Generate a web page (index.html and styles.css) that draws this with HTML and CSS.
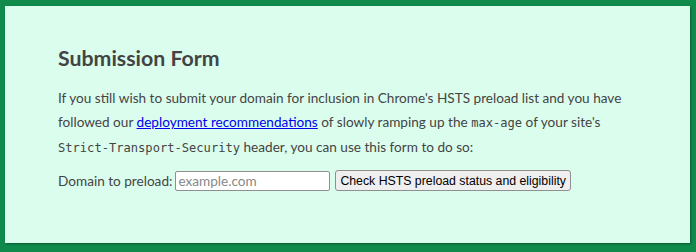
FILE: index.html
```html
<!DOCTYPE html>
<html>
<head>
<meta charset="utf-8">
<link rel="stylesheet" href="styles.css">
</head>
<body>
<div class="panel">
  <h2 class="title">Submission Form</h2>
  <p class="intro">If you still wish to submit your domain for inclusion in Chrome's HSTS preload list and you have followed our <a href="#">deployment recommendations</a> of slowly ramping up the <code>max-age</code> of your site's <code>Strict-Transport-Security</code> header, you can use this form to do so:</p>
  <form class="form">
    <label class="label">Domain to preload:</label>
    <input class="domain" type="text" placeholder="example.com">
    <button class="check" type="button">Check HSTS preload status and eligibility</button>
  </form>
</div>
</body>
</html>
```
FILE: styles.css
```css
html, body {
  margin: 0;
  padding: 0;
}
body {
  background: #0f8a4b;
  width: 696px;
  height: 252px;
  padding: 6px 6px 9px 5px;
  box-sizing: border-box;
  font-family: "Lato", "Noto Sans", sans-serif;
  color: #444;
}
.panel {
  background: #dbfded;
  height: 237px;
  box-sizing: border-box;
  padding: 38px 53px 0 53px;
  box-shadow: 1px 1px 2px rgba(0,0,0,0.35);
}
.title {
  margin: 0;
  font-size: 21.3px;
  font-weight: 700;
  line-height: 28px;
  color: #444;
}
.intro {
  margin: 14px 0 0 0;
  font-size: 13.6px;
  line-height: 24px;
}
.intro a {
  color: #0000ee;
}
code {
  font-family: "DejaVu Sans Mono", monospace;
  font-size: 12.1px;
}
.form {
  margin: 10px 0 0 0;
  display: flex;
  align-items: center;
  font-size: 13.6px;
}
.label {
  margin-right: 3px;
}
.domain {
  width: 155px;
  height: 20px;
  box-sizing: border-box;
  border: 1px solid #8f8f8f;
  border-radius: 2px;
  padding: 0 2px;
  font-family: "Lato", sans-serif;
  font-size: 13.6px;
  margin: 0 5px 0 0;
  background: #fff;
}
.domain::placeholder {
  color: #888;
}
.check {
  height: 21px;
  padding: 0 4px;
  border: 1px solid #8f8f8f;
  border-radius: 3px;
  background: #efefef;
  font-family: "Liberation Sans", sans-serif;
  font-size: 12.3px;
  color: #000;
}
```
